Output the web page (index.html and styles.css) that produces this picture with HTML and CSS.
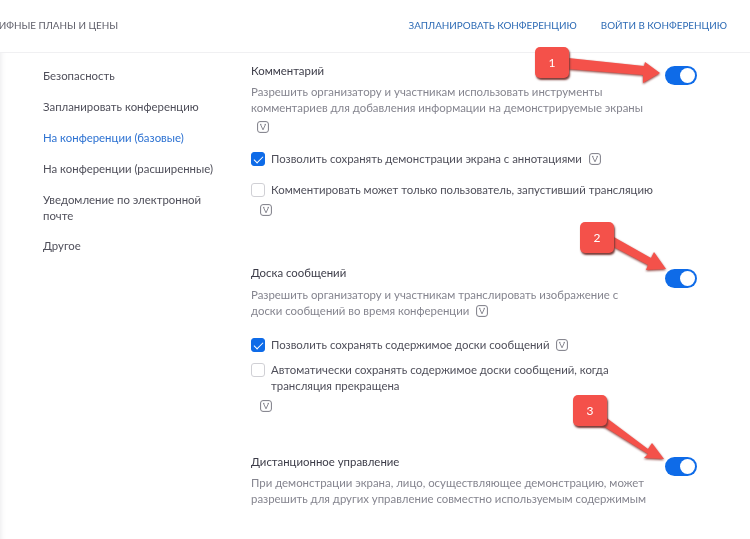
FILE: index.html
```html
<!DOCTYPE html>
<html lang="ru">
<head>
    <meta charset="UTF-8">
    <title>Настройки конференции</title>
    <link rel="stylesheet" href="styles.css">
</head>
<body>
    <svg width="0" height="0" class="defs">
        <symbol id="hint" viewBox="0 0 12 12">
            <rect x="0.6" y="0.6" width="10.8" height="10.8" rx="2.4" fill="none" stroke="#7c7c86" stroke-width="1"/>
            <path d="M3 3.4h1.4M7.6 3.4H9M3.6 3.6 6 8.8l2.4-5.2" fill="none" stroke="#7c7c86" stroke-width="0.9"/>
        </symbol>
    </svg>
    <div class="page">
        <header class="topbar">
            <a class="plans">ТАРИФНЫЕ ПЛАНЫ И ЦЕНЫ</a>
            <nav class="toplinks">
                <a>ЗАПЛАНИРОВАТЬ КОНФЕРЕНЦИЮ</a>
                <a>ВОЙТИ В КОНФЕРЕНЦИЮ</a>
            </nav>
        </header>
        <div class="layout">
            <aside class="sidebar">
                <a>Безопасность</a>
                <a>Запланировать конференцию</a>
                <a class="active">На конференции (базовые)</a>
                <a>На конференции (расширенные)</a>
                <a>Уведомление по электронной почте</a>
                <a>Другое</a>
            </aside>
            <main class="settings">
                <section class="setting first">
                    <div class="setting-head">
                        <h3>Комментарий</h3>
                        <span class="toggle"></span>
                    </div>
                    <p class="desc">Разрешить организатору и участникам использовать инструменты комментариев для добавления информации на демонстрируемые экраны</p>
                    <svg class="hint hint-line"><use href="#hint"/></svg>
                    <label class="check one"><span class="box on"></span><span>Позволить сохранять демонстрации экрана с аннотациями <svg class="hint hint-after"><use href="#hint"/></svg></span></label>
                    <label class="check two"><span class="box"></span><span>Комментировать может только пользователь, запустивший трансляцию</span></label>
                    <svg class="hint hint-under"><use href="#hint"/></svg>
                </section>
                <section class="setting second">
                    <div class="setting-head">
                        <h3>Доска сообщений</h3>
                        <span class="toggle"></span>
                    </div>
                    <p class="desc">Разрешить организатору и участникам транслировать изображение с доски сообщений во время конференции <svg class="hint hint-after"><use href="#hint"/></svg></p>
                    <label class="check three"><span class="box on"></span><span>Позволить сохранять содержимое доски сообщений <svg class="hint hint-after"><use href="#hint"/></svg></span></label>
                    <label class="check four"><span class="box"></span><span>Автоматически сохранять содержимое доски сообщений, когда трансляция прекращена</span></label>
                    <svg class="hint hint-under"><use href="#hint"/></svg>
                </section>
                <section class="setting third">
                    <div class="setting-head">
                        <h3>Дистанционное управление</h3>
                        <span class="toggle"></span>
                    </div>
                    <p class="desc">При демонстрации экрана, лицо, осуществляющее демонстрацию, может разрешить для других управление совместно используемым содержимым</p>
                </section>
            </main>
        </div>

        <svg class="arrows" width="750" height="539" viewBox="0 0 750 539">
            <g class="arrow-shapes" fill="#f4514a">
                <path d="M568 58 644 66 645 62 660 73 643 83 643 75 568 69Z"/>
                <path d="M612 236 651 258 654 252 666 269 646 270 648 265 608 244Z"/>
                <path d="M604 416 648 449 652 443 664 459 644 458 648 454 600 424Z"/>
            </g>
        </svg>
        <span class="badge badge-1">1</span>
        <span class="badge badge-2">2</span>
        <span class="badge badge-3">3</span>
    </div>
</body>
</html>
```

FILE: styles.css
```css
* {
    box-sizing: border-box;
}
html, body {
    margin: 0;
    height: 100%;
    overflow: hidden;
}
body {
    font-family: Lato, "Open Sans", sans-serif;
    background-color: #ffffff;
    color: #3c3c48;
}
.defs {
    position: absolute;
}
.page {
    position: relative;
    width: 750px;
    height: 539px;
    overflow: hidden;
    filter: blur(0.35px);
}
.topbar {
    height: 53px;
    display: flex;
    justify-content: space-between;
    align-items: center;
    padding: 0 23px 2px 0;
    border-bottom: 1px solid #f0f0f2;
    font-size: 9.85px;
}
.plans {
    margin-left: -19px;
    color: #5f5f6a;
}
.toplinks {
    display: flex;
    gap: 24px;
    color: #2d6bb5;
}
.layout {
    display: flex;
    box-shadow: inset 6px 0 6px -6px #e4e4e6;
    height: 486px;
}
.sidebar {
    width: 251px;
    padding: 15px 30px 0 43px;
    display: flex;
    flex-direction: column;
    gap: 14.9px;
    font-size: 11.4px;
    line-height: 16px;
    color: #4f4f5a;
    flex: none;
}
.sidebar .active {
    color: #2d72d2;
}
.settings {
    width: 446px;
    flex: none;
}
.setting {
    font-size: 11.4px;
    line-height: 16px;
}
.setting.first {
    padding-top: 10px;
}
.setting.second {
    padding-top: 49px;
}
.setting.third {
    padding-top: 42px;
}
.setting-head {
    display: flex;
    justify-content: space-between;
    align-items: flex-start;
    height: 16px;
}
.setting-head h3 {
    margin: 0;
    font-size: 11.4px;
    font-weight: normal;
    color: #3c3c48;
}
.toggle {
    position: relative;
    width: 32px;
    height: 19px;
    margin-top: 3px;
    border-radius: 10px;
    background: #0e6be8;
}
.toggle::after {
    content: "";
    position: absolute;
    right: 2px;
    top: 2px;
    width: 15px;
    height: 15px;
    border-radius: 50%;
    background: #ffffff;
}
.setting.second .toggle {
    margin-top: 4px;
}
.desc {
    margin: 5px 0 0;
    width: 398px;
    color: #85858f;
}
.setting.second .desc {
    margin-top: 6px;
}
.hint {
    width: 12px;
    height: 12px;
    display: inline-block;
}
.hint-line {
    display: block;
    margin: 5px 0 0 6px;
}
.hint-after {
    margin-left: 4px;
    vertical-align: -2px;
}
.hint-under {
    display: block;
    margin: 6px 0 0 9px;
}
.check {
    display: flex;
    gap: 6px;
    width: 412px;
    color: #4f4f5a;
}
.check.one {
    margin-top: 18px;
}
.check.two {
    margin-top: 15px;
}
.check.three {
    margin-top: 18px;
}
.check.four {
    margin-top: 9px;
}
.box {
    width: 14px;
    height: 14px;
    margin-top: 1px;
    flex: none;
    border: 1px solid #d0d0d5;
    border-radius: 3px;
    background: #ffffff;
    position: relative;
}
.box.on {
    background: #0e6be8;
    border-color: #0e6be8;
}
.box.on::after {
    content: "";
    position: absolute;
    left: 4px;
    top: 1px;
    width: 4px;
    height: 8px;
    border: solid #ffffff;
    border-width: 0 1.5px 1.5px 0;
    transform: rotate(45deg);
}
.arrows {
    position: absolute;
    left: 0;
    top: 0;
    pointer-events: none;
}
.arrow-shapes {
    filter: drop-shadow(0 1.5px 1px #8a3b36);
}
.badge {
    position: absolute;
    width: 34px;
    height: 31px;
    border-radius: 5px;
    background: #f4514a;
    box-shadow: 1px 2px 2px #7a3a36;
    color: #ffffff;
    font-size: 12px;
    line-height: 31px;
    text-align: center;
}
.badge-1 {
    left: 535px;
    top: 47px;
}
.badge-2 {
    left: 580px;
    top: 222px;
}
.badge-3 {
    left: 573px;
    top: 395px;
}
```
